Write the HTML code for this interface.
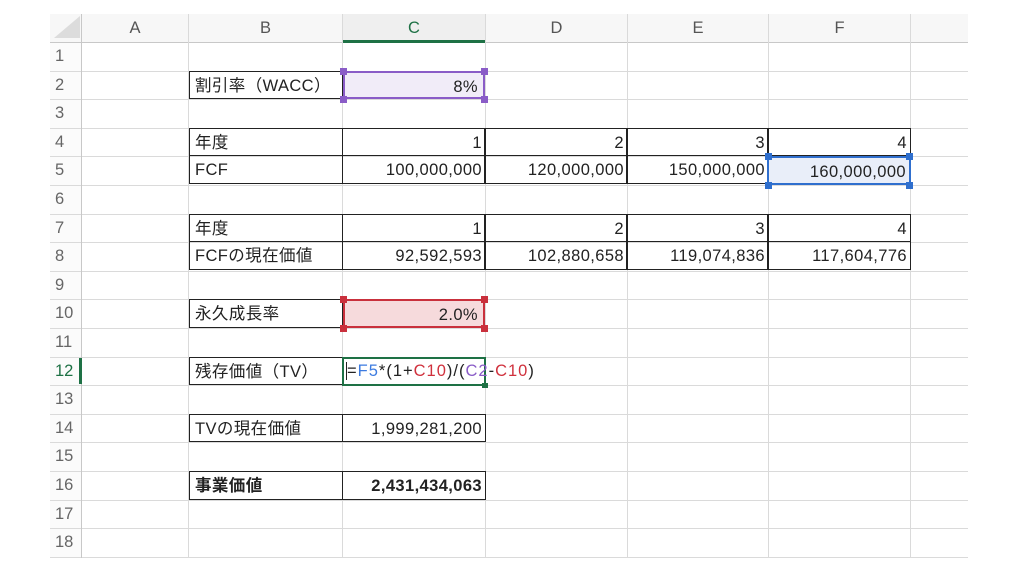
<!DOCTYPE html>
<html><head><meta charset="utf-8"><style>
body{margin:0;width:1020px;height:574px;background:#fff;position:relative;overflow:hidden;font-family:"Liberation Sans","Noto Sans CJK JP",sans-serif;}
.a{position:absolute;box-sizing:border-box}
.h{background:#dadada;height:1px}
.v{background:#dadada;width:1px}
.c{position:absolute;box-sizing:border-box;height:28.6px;line-height:28px;font-size:16.5px;letter-spacing:0.4px;color:#222;padding:0 5px;white-space:nowrap}
.r{text-align:right;padding-right:3px}
.bx{border:1.5px solid #222}
.rn{position:absolute;left:55px;width:26px;font-size:16.5px;color:#666;height:28.6px;line-height:29px}
.ch{position:absolute;top:14px;height:28px;line-height:28px;text-align:center;font-size:16.5px;color:#555}
.hd{position:absolute;width:7px;height:7px}
</style></head><body>
<div class="a" style="left:50px;top:14px;width:918px;height:28px;background:#f7f7f7"></div>
<div class="a" style="left:50px;top:42px;width:32px;height:516px;background:#fbfbfb"></div>
<div class="a" style="left:54px;top:16px;width:0;height:0;border-left:26px solid transparent;border-bottom:22px solid #dcdcdc"></div>
<div class="a h" style="left:50px;top:42px;width:918px;background:#c8c8c8"></div>
<div class="a h" style="left:50px;top:70.6px;width:918px"></div>
<div class="a h" style="left:50px;top:99.2px;width:918px"></div>
<div class="a h" style="left:50px;top:127.8px;width:918px"></div>
<div class="a h" style="left:50px;top:156.4px;width:918px"></div>
<div class="a h" style="left:50px;top:185px;width:918px"></div>
<div class="a h" style="left:50px;top:213.6px;width:918px"></div>
<div class="a h" style="left:50px;top:242.2px;width:918px"></div>
<div class="a h" style="left:50px;top:270.8px;width:918px"></div>
<div class="a h" style="left:50px;top:299.4px;width:918px"></div>
<div class="a h" style="left:50px;top:328px;width:918px"></div>
<div class="a h" style="left:50px;top:356.6px;width:918px"></div>
<div class="a h" style="left:50px;top:385.2px;width:918px"></div>
<div class="a h" style="left:50px;top:413.8px;width:918px"></div>
<div class="a h" style="left:50px;top:442.4px;width:918px"></div>
<div class="a h" style="left:50px;top:471px;width:918px"></div>
<div class="a h" style="left:50px;top:499.6px;width:918px"></div>
<div class="a h" style="left:50px;top:528.2px;width:918px"></div>
<div class="a h" style="left:50px;top:556.8px;width:918px"></div>
<div class="a v" style="left:81px;top:14px;height:544px;background:#c8c8c8"></div>
<div class="a v" style="left:188px;top:14px;height:544px"></div>
<div class="a v" style="left:342px;top:14px;height:544px"></div>
<div class="a v" style="left:485px;top:14px;height:544px"></div>
<div class="a v" style="left:627px;top:14px;height:544px"></div>
<div class="a v" style="left:768px;top:14px;height:544px"></div>
<div class="a v" style="left:910px;top:14px;height:544px"></div>
<div class="ch" style="left:82px;width:106px">A</div>
<div class="ch" style="left:189px;width:153px">B</div>
<div class="ch" style="left:343px;width:142px;color:#1e7145;background:#efefef">C</div>
<div class="a" style="left:343px;top:40px;width:142px;height:2.5px;background:#1e7145"></div>
<div class="ch" style="left:486px;width:141px">D</div>
<div class="ch" style="left:628px;width:140px">E</div>
<div class="ch" style="left:769px;width:141px">F</div>
<div class="rn" style="top:42px">1</div>
<div class="rn" style="top:70.6px">2</div>
<div class="rn" style="top:99.2px">3</div>
<div class="rn" style="top:127.8px">4</div>
<div class="rn" style="top:156.4px">5</div>
<div class="rn" style="top:185px">6</div>
<div class="rn" style="top:213.6px">7</div>
<div class="rn" style="top:242.2px">8</div>
<div class="rn" style="top:270.8px">9</div>
<div class="rn" style="top:299.4px">10</div>
<div class="rn" style="top:328px">11</div>
<div class="rn" style="top:356.6px;color:#1e7145">12</div>
<div class="a" style="left:79px;top:358px;width:3px;height:26px;background:#1e7145"></div>
<div class="rn" style="top:385.2px">13</div>
<div class="rn" style="top:413.8px">14</div>
<div class="rn" style="top:442.4px">15</div>
<div class="rn" style="top:471px">16</div>
<div class="rn" style="top:499.6px">17</div>
<div class="rn" style="top:528.2px">18</div>

<div class="c bx" style="left:189px;top:70.6px;width:154px">割引率（WACC）</div>
<div class="c r" style="left:343px;top:70.6px;width:142px;background:#f1ecf8;border:2.5px solid #8a5cc7;padding-right:5px">8%</div>
<div class="hd" style="left:340px;top:67.5px;background:#8a5cc7"></div>
<div class="hd" style="left:481px;top:67.5px;background:#8a5cc7"></div>
<div class="hd" style="left:340px;top:96px;background:#8a5cc7"></div>
<div class="hd" style="left:481px;top:96px;background:#8a5cc7"></div>

<div class="c bx" style="left:189px;top:127.8px;width:154px">年度</div>
<div class="c bx r" style="left:342px;top:127.8px;width:144px">1</div>
<div class="c bx r" style="left:484px;top:127.8px;width:144px">2</div>
<div class="c bx r" style="left:626px;top:127.8px;width:143px">3</div>
<div class="c bx r" style="left:767px;top:127.8px;width:144px">4</div>
<div class="c bx" style="left:189px;top:155.4px;width:154px">FCF</div>
<div class="c bx r" style="left:342px;top:155.4px;width:144px">100,000,000</div>
<div class="c bx r" style="left:484px;top:155.4px;width:144px">120,000,000</div>
<div class="c bx r" style="left:626px;top:155.4px;width:143px">150,000,000</div>
<div class="c r" style="left:767px;top:156.4px;width:144px;background:#e9eef9;border:2.5px solid #2f6fce;padding-right:3px">160,000,000</div>
<div class="hd" style="left:765px;top:153px;background:#2f6fce"></div>
<div class="hd" style="left:906px;top:153px;background:#2f6fce"></div>
<div class="hd" style="left:765px;top:181.5px;background:#2f6fce"></div>
<div class="hd" style="left:906px;top:181.5px;background:#2f6fce"></div>

<div class="c bx" style="left:189px;top:213.6px;width:154px">年度</div>
<div class="c bx r" style="left:342px;top:213.6px;width:144px">1</div>
<div class="c bx r" style="left:484px;top:213.6px;width:144px">2</div>
<div class="c bx r" style="left:626px;top:213.6px;width:143px">3</div>
<div class="c bx r" style="left:767px;top:213.6px;width:144px">4</div>
<div class="c bx" style="left:189px;top:241.2px;width:154px">FCFの現在価値</div>
<div class="c bx r" style="left:342px;top:241.2px;width:144px">92,592,593</div>
<div class="c bx r" style="left:484px;top:241.2px;width:144px">102,880,658</div>
<div class="c bx r" style="left:626px;top:241.2px;width:143px">119,074,836</div>
<div class="c bx r" style="left:767px;top:241.2px;width:144px">117,604,776</div>

<div class="c bx" style="left:189px;top:299.4px;width:154px">永久成長率</div>
<div class="c r" style="left:343px;top:299.4px;width:142px;background:#f6dadc;border:2.5px solid #c9303c;padding-right:5px">2.0%</div>
<div class="hd" style="left:340px;top:296px;background:#c9303c"></div>
<div class="hd" style="left:481px;top:296px;background:#c9303c"></div>
<div class="hd" style="left:340px;top:325px;background:#c9303c"></div>
<div class="hd" style="left:481px;top:325px;background:#c9303c"></div>

<div class="c bx" style="left:189px;top:356.6px;width:154px">残存価値（TV）</div>
<div class="a" style="left:342px;top:356.6px;width:144px;height:29px;border:2.5px solid #1e7145;background:#fff"></div>
<div class="c" style="left:344px;top:356.6px;padding-left:2px;overflow:visible;letter-spacing:1px"><span style="border-left:1px solid #222">=</span><span style="color:#3c7be0">F5</span>*(1+<span style="color:#d0313d">C10</span>)/(<span style="color:#8a5cc7">C2</span>-<span style="color:#d0313d">C10</span>)</div>
<div class="hd" style="left:482px;top:383px;width:6px;height:5px;background:#1e7145"></div>

<div class="c bx" style="left:189px;top:413.8px;width:154px">TVの現在価値</div>
<div class="c bx r" style="left:342px;top:413.8px;width:144px">1,999,281,200</div>
<div class="c bx" style="left:189px;top:471px;width:154px;font-weight:bold">事業価値</div>
<div class="c bx r" style="left:342px;top:471px;width:144px;font-weight:bold">2,431,434,063</div>
</body></html>
